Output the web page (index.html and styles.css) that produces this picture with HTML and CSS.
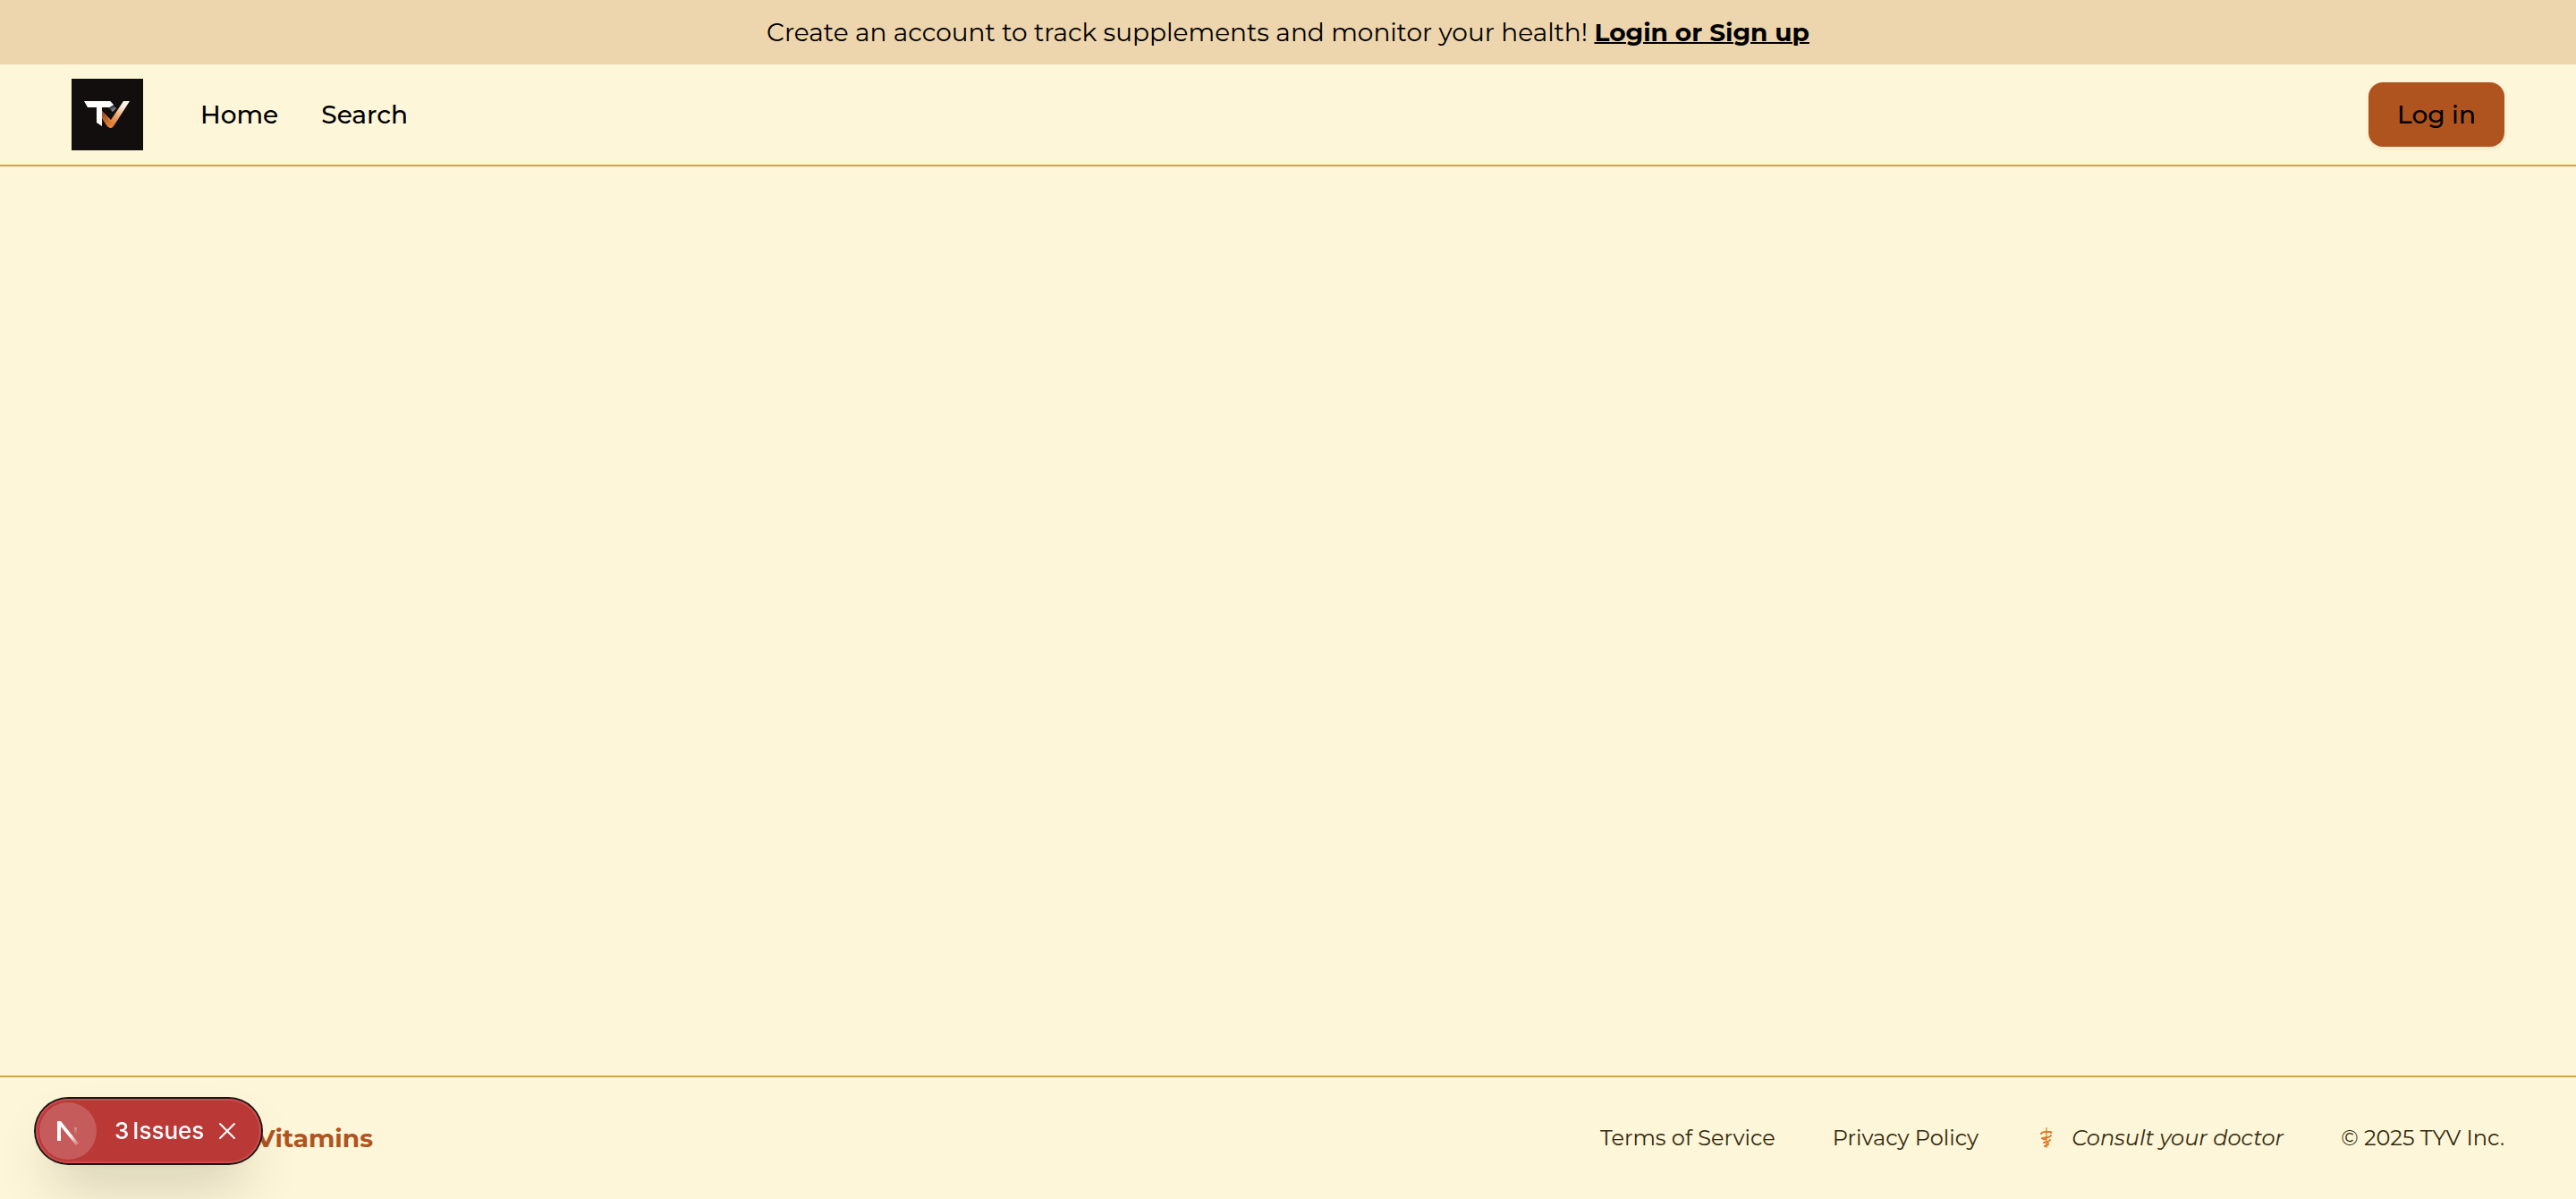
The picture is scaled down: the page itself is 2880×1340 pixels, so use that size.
FILE: index.html
```html
<!DOCTYPE html>
<html lang="en">
<head>
<meta charset="utf-8">
<meta name="viewport" content="width=device-width, initial-scale=1">
<title>Track Your Vitamins</title>
<link rel="stylesheet" href="styles.css">
</head>
<body>
<aside class="banner">
  <p>Create an account to track supplements and monitor your health! <a class="banner-link" href="#login">Login or Sign up</a></p>
</aside>
<header class="header">
  <a class="logo" href="#home" aria-label="Track Your Vitamins">
    <svg viewBox="0 0 80 80" width="80" height="80" aria-hidden="true">
      <defs>
        <linearGradient id="check" x1="64" y1="25" x2="42" y2="55" gradientUnits="userSpaceOnUse">
          <stop offset="0" stop-color="#fff"/>
          <stop offset="0.25" stop-color="#fbead8"/>
          <stop offset="0.6" stop-color="#e9a062"/>
          <stop offset="1" stop-color="#dc6c20"/>
        </linearGradient>
        <linearGradient id="stem" x1="34" y1="33" x2="43" y2="54" gradientUnits="userSpaceOnUse">
          <stop offset="0" stop-color="#7c3b1c"/>
          <stop offset="1" stop-color="#f08537"/>
        </linearGradient>
        <linearGradient id="fold" x1="43" y1="26" x2="49" y2="36" gradientUnits="userSpaceOnUse">
          <stop offset="0" stop-color="#fff"/>
          <stop offset="0.5" stop-color="#35343d"/>
          <stop offset="1" stop-color="#aaa9b8"/>
        </linearGradient>
      </defs>
      <rect width="80" height="80" fill="#120e0d"/>
      <path d="M43 25l7 8-4 4-8-8z" fill="url(#fold)"/>
      <path d="M34 36l10 10 14-21h7L47 53q-3 4-7 0l-6-9z" fill="url(#check)"/>
      <path d="M34 36l9 11 3 7q-3 2-6-1l-6-9z" fill="url(#stem)"/>
      <path d="M14 25h29l4 4-5 3-8 0v21l-6-4V32H18z" fill="#fff"/>
    </svg>
  </a>
  <nav class="nav" aria-label="Main">
    <a href="#home">Home</a>
    <a href="#search">Search</a>
  </nav>
  <button class="login" type="button">Log in</button>
</header>
<main class="main"></main>
<footer class="footer">
  <span class="brand">Track Your Vitamins</span>
  <nav class="footer-links" aria-label="Footer">
    <a href="#terms">Terms of Service</a>
    <a href="#privacy">Privacy Policy</a>
    <span class="advice">
      <svg viewBox="0 0 20 24" width="20" height="24" fill="none" stroke="#db7b2b" stroke-width="2" stroke-linecap="round" aria-hidden="true">
        <path d="M12 1v21" stroke="#eba661"/>
        <path d="M6 7q1-2 4-2h6q2 0 1 1M7 12l7-1q3-1 3-2M8 12q0 2 3 1M9 17l4-1q3-1 3-2M10 21l2-1q2 0 2-2"/>
      </svg>
      <em>Consult your doctor</em>
    </span>
    <span>© 2025 TYV Inc.</span>
  </nav>
</footer>
<div class="issues">
  <button class="issues-logo" type="button" aria-label="Open developer tools">
    <svg viewBox="0 0 32 32" width="32" height="32" fill="none" aria-hidden="true">
      <defs>
        <linearGradient id="diagonal" x1="19" y1="20" x2="28" y2="32" gradientUnits="userSpaceOnUse">
          <stop stop-color="#fff"/>
          <stop offset="1" stop-color="#fff" stop-opacity="0.1"/>
        </linearGradient>
        <linearGradient id="upright" x1="0" y1="10" x2="0" y2="20" gradientUnits="userSpaceOnUse">
          <stop stop-color="#fff" stop-opacity="0.4"/>
          <stop offset="1" stop-color="#fff" stop-opacity="0"/>
        </linearGradient>
      </defs>
      <path d="M4 5h4v22H4z" fill="#fff"/>
      <path d="M4 5h4l20 25-3 2L4 6z" fill="url(#diagonal)"/>
      <path d="M23 12h3v9h-3z" fill="url(#upright)"/>
    </svg>
  </button>
  <button class="issues-open" type="button"><span>3</span><span>Issues</span></button>
  <button class="issues-close" type="button" aria-label="Hide issues">
    <svg viewBox="0 0 20 20" width="20" height="20" fill="none" stroke="#fff" stroke-width="2" stroke-linecap="round" aria-hidden="true">
      <path d="M2 2l16 16M18 2L2 18"/>
    </svg>
  </button>
</div>
</body>
</html>
```
FILE: styles.css
```css
* { box-sizing: border-box; }

body {
  display: flex;
  flex-direction: column;
  min-height: 100vh;
  margin: 0;
  background: #fdf6d8;
  color: #000;
  font-family: Montserrat, Inter, sans-serif;
  font-size: 28px;
  line-height: 40px;
}

a { color: inherit; text-decoration: none; }
button { border: 0; padding: 0; font: inherit; color: inherit; cursor: pointer; }
svg { display: block; }

.banner {
  padding: 16px 32px;
  background: #edd5ad;
  text-align: center;
}
.banner p { margin: 0; }
.banner-link {
  font-weight: 700;
  text-decoration: underline;
  text-decoration-thickness: 2px;
}

.header {
  display: flex;
  align-items: center;
  padding: 16px 80px;
  border-bottom: 2px solid #cfa53f;
  font-weight: 500;
}
.nav { display: flex; gap: 48px; margin-left: 64px; }
.login {
  margin-left: auto;
  padding: 16px 32px;
  border-radius: 16px;
  background: #b0541f;
  box-shadow: 0 2px 4px #b0541f1a;
}

.main { flex: 1; }

.footer {
  display: flex;
  align-items: center;
  justify-content: space-between;
  padding: 48px 80px;
  border-top: 2px solid #cfa53f;
}
.brand {
  padding-left: 44px;
  color: #b0541f;
  font-weight: 700;
}
.footer-links {
  display: flex;
  gap: 64px;
  color: #33290d;
  font-size: 24px;
}
.advice { display: flex; align-items: center; gap: 20px; }

.issues {
  position: fixed;
  left: 40px;
  bottom: 40px;
  display: flex;
  align-items: center;
  height: 72px;
  padding: 0 28px 0 4px;
  border-radius: 36px;
  background: #ba3836;
  color: #fff;
  box-shadow: inset 0 0 0 2px #cc4a4c, 0 0 0 2px #171717, 0 32px 64px -16px #0000003d, 0 4px 8px #0000000a;
  font-family: Inter, sans-serif;
  font-size: 26px;
  font-weight: 500;
}
.issues button { background: none; }
.issues .issues-logo {
  display: grid;
  place-items: center;
  width: 64px;
  height: 64px;
  border-radius: 50%;
  background: #c55c5b;
}
.issues-open { display: flex; gap: 4px; margin: 0 16px 0 20px; }
```
